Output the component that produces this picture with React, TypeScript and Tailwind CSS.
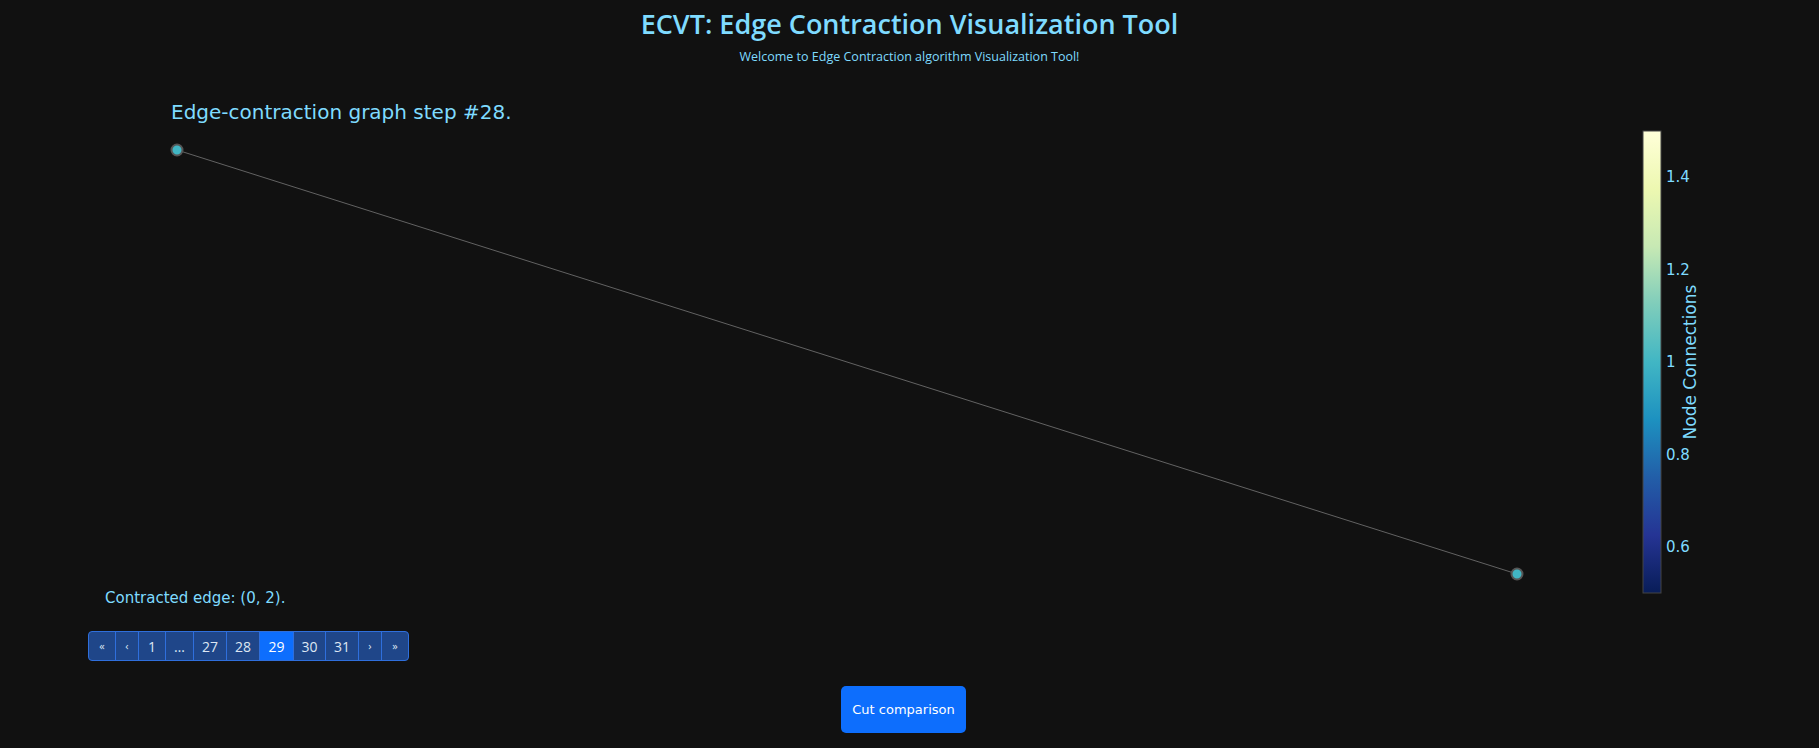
import React from "react";

const pages = [
  { label: "«", w: "w-[26px]", small: true },
  { label: "‹", w: "w-[23px]", small: true },
  { label: "1", w: "w-[27px]" },
  { label: "…", w: "w-[28px]" },
  { label: "27", w: "w-[33px]" },
  { label: "28", w: "w-[33px]" },
  { label: "29", w: "w-[34px]", active: true },
  { label: "30", w: "w-[32px]" },
  { label: "31", w: "w-[33px]" },
  { label: "›", w: "w-[23px]", small: true },
  { label: "»", w: "w-[27px]", small: true },
];

// YlGnBu, top = high value
const stops = ["#ffffd9", "#edf8b1", "#c7e9b4", "#7fcdbb", "#41b6c4", "#1d91c0", "#225ea8", "#253494", "#081d58"];

const ticks = [
  { v: "1.4", y: 177 },
  { v: "1.2", y: 270 },
  { v: "1", y: 362 },
  { v: "0.8", y: 455 },
  { v: "0.6", y: 547 },
];

const plotFont = "'DejaVu Sans', Verdana, sans-serif";

function Graph() {
  return (
    <svg width="1819" height="545" viewBox="0 75 1819 545" className="mt-[10px] block">
      <defs>
        <linearGradient id="ylgnbu" x1="0" y1="0" x2="0" y2="1">
          {stops.map((c, i) => (
            <stop key={c} offset={i / (stops.length - 1)} stopColor={c} />
          ))}
        </linearGradient>
      </defs>
      <text x="171" y="119" fill="#7FDBFF" fontFamily={plotFont} fontSize="20">
        Edge-contraction graph step #28.
      </text>
      {/* edge */}
      <line x1="177" y1="150" x2="1517" y2="574" stroke="#777" strokeWidth="0.8" />
      {/* nodes */}
      <circle cx="177" cy="150" r="5.5" fill="#41b6c4" stroke="#555" strokeWidth="2" />
      <circle cx="1517" cy="574" r="5.5" fill="#41b6c4" stroke="#555" strokeWidth="2" />
      {/* colorbar */}
      <rect x="1643" y="131" width="18" height="462" fill="url(#ylgnbu)" stroke="#444" strokeWidth="1" />
      {ticks.map((t) => (
        <text key={t.v} x="1666" y={t.y + 5} fill="#7FDBFF" fontFamily={plotFont} fontSize="15">
          {t.v}
        </text>
      ))}
      <text
        x="1696"
        y="362"
        fill="#7FDBFF"
        fontFamily={plotFont}
        fontSize="17"
        textAnchor="middle"
        transform="rotate(-90 1696 362)"
      >
        Node Connections
      </text>
      <text x="105" y="603" fill="#7FDBFF" fontFamily={plotFont} fontSize="15">
        Contracted edge: (0, 2).
      </text>
    </svg>
  );
}

export default function App() {
  return (
    <div className="min-h-[748px] bg-[#111111] font-['Open_Sans',sans-serif] text-[#7FDBFF]">
      <h1 className="pt-[5px] text-center text-[27px] leading-[38px] font-semibold">
        ECVT: Edge Contraction Visualization Tool
      </h1>
      <p className="mt-[6px] text-center text-[12.5px] leading-[16px]">
        Welcome to Edge Contraction algorithm Visualization Tool!
      </p>

      <Graph />

      {/* pagination */}
      <div className="mt-[11px] ml-[88px] flex">
        <ul className="flex h-[30px] overflow-hidden rounded-[4px] border border-[#2f6fdc] bg-[#1f4689]">
          {pages.map((p, i) => (
            <li
              key={p.label}
              className={`${p.w} flex items-center justify-center ${i > 0 ? "border-l border-[#2f6fdc]" : ""} ${
                p.active ? "bg-[#0d6efd] text-white" : "text-[#dde6f3]"
              } ${p.small ? "text-[11px]" : "text-[14px]"}`}
            >
              {p.label}
            </li>
          ))}
        </ul>
      </div>

      <div className="mt-[25px] flex justify-center">
        <button className="h-[47px] w-[125px] -translate-x-[6px] rounded-[5px] bg-[#0d6efd] font-['DejaVu_Sans',Verdana,sans-serif] text-[13px] text-white">
          Cut comparison
        </button>
      </div>
    </div>
  );
}
